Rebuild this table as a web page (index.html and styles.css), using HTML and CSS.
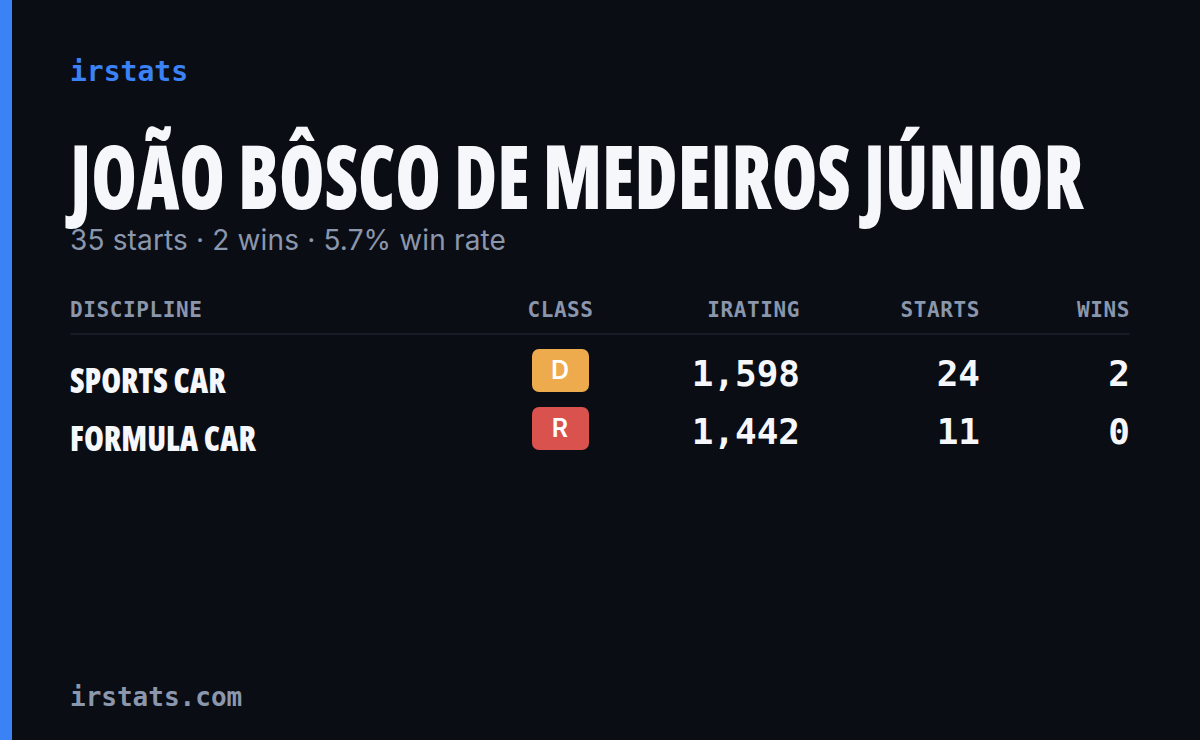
FILE: index.html
```html
<!DOCTYPE html>
<html>
<head>
<meta charset="utf-8">
<link rel="stylesheet" href="styles.css">
</head>
<body>
<div class="card">
  <div class="accent"></div>
  <main class="content">
    <div class="brand">irstats</div>
    <h1 class="name"><span class="squeeze">JOÃO BÔSCO DE MEDEIROS JÚNIOR</span></h1>
    <div class="summary">35 starts · 2 wins · 5.7% win rate</div>
    <div class="table">
      <div class="row head">
        <div class="c-disc">DISCIPLINE</div>
        <div class="c-class">CLASS</div>
        <div class="c-num">IRATING</div>
        <div class="c-num">STARTS</div>
        <div class="c-num">WINS</div>
      </div>
      <div class="row body">
        <div class="c-disc disc"><span class="squeeze-sm">SPORTS CAR</span></div>
        <div class="c-class"><span class="badge badge-d">D</span></div>
        <div class="c-num num">1,598</div>
        <div class="c-num num">24</div>
        <div class="c-num num">2</div>
      </div>
      <div class="row body">
        <div class="c-disc disc"><span class="squeeze-sm">FORMULA CAR</span></div>
        <div class="c-class"><span class="badge badge-r">R</span></div>
        <div class="c-num num">1,442</div>
        <div class="c-num num">11</div>
        <div class="c-num num">0</div>
      </div>
    </div>
    <div class="footer">irstats.com</div>
  </main>
</div>
</body>
</html>
```

FILE: styles.css
```css
html, body {
  margin: 0;
  padding: 0;
  background: #0a0d14;
}
.card {
  width: 1200px;
  height: 740px;
  display: flex;
  background: #0a0d14;
  overflow: hidden;
}
.accent {
  width: 12px;
  flex: none;
  background: #3b82f6;
}
.content {
  flex: 1;
  min-width: 0;
  display: flex;
  flex-direction: column;
  padding: 54px 70px 26px 58px;
}
.brand {
  font-family: "DejaVu Sans Mono", monospace;
  font-weight: 700;
  font-size: 28px;
  line-height: 36px;
  color: #3b82f6;
}
.name {
  margin: 42px 0 0 0;
  font-family: "Open Sans", sans-serif;
  font-stretch: 75%;
  font-weight: 800;
  font-size: 88px;
  line-height: 86px;
  color: #f5f7fb;
  white-space: nowrap;
}
.squeeze {
  display: inline-block;
  letter-spacing: 0;
  transform: scaleX(0.836);
  transform-origin: left center;
}
.summary {
  margin-top: 4px;
  font-family: "Inter", "Noto Sans", sans-serif;
  font-size: 28px;
  letter-spacing: 0.15px;
  line-height: 36px;
  color: #8a97ad;
}
.table {
  margin-top: 40px;
}
.row {
  display: grid;
  grid-template-columns: 440px 100px 190px 180px 150px;
  align-items: center;
}
.head {
  font-family: "DejaVu Sans Mono", monospace;
  font-weight: 700;
  font-size: 21px;
  letter-spacing: 0.6px;
  line-height: 24px;
  color: #8a96ab;
  height: 35px;
  align-items: start;
  border-bottom: 2px solid #171b25;
}
.body {
  height: 58px;
}
.row.body:nth-child(2) {
  margin-top: 1px;
}
.c-class {
  display: flex;
  justify-content: center;
}
.c-num {
  text-align: right;
}
.head .c-class {
  margin-left: 1px;
}
.disc {
  font-family: "Open Sans", sans-serif;
  font-stretch: 75%;
  font-weight: 800;
  font-size: 36px;
  color: #f5f7fb;
  padding-top: 19px;
  white-space: nowrap;
}
.squeeze-sm {
  display: inline-block;
  letter-spacing: 0;
  transform: scaleX(0.89);
  transform-origin: left center;
}
.num {
  font-family: "DejaVu Sans Mono", monospace;
  font-weight: 700;
  font-size: 36px;
  color: #f5f7fb;
  padding-top: 6px;
}
.badge {
  width: 57px;
  height: 43px;
  border-radius: 7px;
  display: flex;
  align-items: center;
  justify-content: center;
  font-family: "Inter", "Noto Sans", sans-serif;
  font-weight: 600;
  font-size: 25px;
  color: #ffffff;
}
.badge-d { background: #eeab4d; }
.badge-r { background: #d9524e; }
.footer {
  margin-top: auto;
  font-family: "DejaVu Sans Mono", monospace;
  font-weight: 700;
  font-size: 26px;
  line-height: 34px;
  color: #8a97ad;
}
```
